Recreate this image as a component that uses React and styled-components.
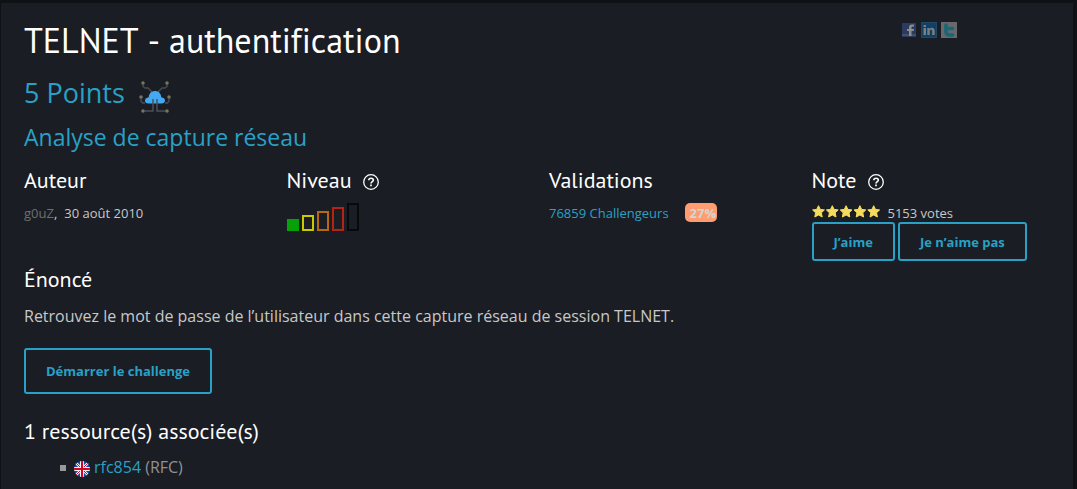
import React from "react";
import styled, { createGlobalStyle } from "styled-components";

const GlobalStyle = createGlobalStyle`
  * { box-sizing: border-box; }
  body {
    margin: 0;
    background: #0f1114;
    color: #c8c8c8;
    font-family: "Open Sans", "Noto Sans", sans-serif;
    font-size: 16px;
    line-height: 24px;
  }
`;

const accent = "#29a1c6";

const Page = styled.div`
  padding: 3px 4px 0 1px;
`;

const Panel = styled.main`
  min-height: calc(100vh - 3px);
  padding: 13px 0 8px 23px;
  background: #1a1d23;
`;

const TopRow = styled.header`
  display: flex;
  justify-content: space-between;
  align-items: flex-start;
`;

const Title = styled.h1`
  margin: 0;
  color: #fff;
  font: 400 34px/48px "PT Sans", "Noto Sans", sans-serif;
  font-kerning: none;
  font-variant-ligatures: none;
`;

const Share = styled.nav`
  display: flex;
  gap: 4px;
  padding: 6px 116px 0 0;
`;

const ShareLink = styled.a`
  display: block;
  height: 16px;
  opacity: 0.5;
  svg { display: block; }
`;

const Points = styled.h2`
  display: flex;
  align-items: center;
  gap: 14px;
  margin: 8px 0 0;
  color: ${accent};
  font: 400 27px/42px "Open Sans", "Noto Sans", sans-serif;
  svg { margin-top: 8px; }
`;

const Category = styled.h3`
  margin: 5px 0 0;
  color: ${accent};
  font: 400 23px/36px "Open Sans", "Noto Sans", sans-serif;
`;

const Facts = styled.section`
  display: grid;
  grid-template-columns: repeat(4, 1fr);
  column-gap: 1px;
  margin-top: 11px;
`;

const Heading = styled.h4`
  display: flex;
  align-items: center;
  gap: 11px;
  margin: 0;
  color: #fff;
  font: 400 22px/28px "PT Sans", "Noto Sans", sans-serif;
`;

const HelpButton = styled.button`
  display: block;
  padding: 3px 0 0;
  border: 0;
  background: none;
  color: #fff;
  svg { display: block; }
`;

const Detail = styled.div`
  display: flex;
  align-items: flex-start;
  gap: ${(p) => p.$gap || 0}px;
  height: 19px;
  margin-top: 9px;
  font-size: 13px;
  line-height: 20px;
  svg { margin-top: 2px; }
`;

const Author = styled.a`
  color: #6f6f6f;
  text-decoration: none;
`;

const Link = styled.a`
  color: ${accent};
  text-decoration: none;
`;

const Levels = styled.div`
  display: flex;
  align-items: flex-end;
  gap: 3px;
  margin-top: 9px;
`;

const Level = styled.span`
  width: 12px;
  height: ${(p) => p.$height}px;
  border: 2px solid ${(p) => p.$color};
  background: ${(p) => (p.$filled ? p.$color : "transparent")};
`;

const Rate = styled.span`
  width: 32px;
  height: 19px;
  padding-left: 5px;
  border-radius: 5px;
  background: #ff9c70;
  color: #d5d5d5;
  font-weight: 700;
`;

const Votes = styled.div`
  display: flex;
  gap: 3px;
`;

const Button = styled.button`
  height: ${(p) => (p.$large ? 46 : 39)}px;
  padding: 0 20px;
  border: 2px solid ${accent};
  border-radius: 3px;
  background: transparent;
  color: ${accent};
  font: 700 13px/16px "Open Sans", "Noto Sans", sans-serif;
  white-space: nowrap;
`;

const Statement = styled.section`
  margin-top: 4px;
  p { margin: 11px 0 20px; }
`;

const Resources = styled.section`
  margin-top: 23px;
`;

const ResourceList = styled.ul`
  margin: 10px 0 0;
  padding: 0;
  list-style: none;
`;

const Resource = styled.li`
  display: flex;
  align-items: center;
  gap: 4px;
  padding-left: 36px;
  color: #929292;
  svg { margin-top: 3px; }
  &::before {
    content: "";
    width: 6px;
    height: 6px;
    margin: 2px 4px 0 0;
    background: #999;
  }
`;

const HelpIcon = () => (
  <svg width="16" height="16" viewBox="0 0 16 16" fill="none" stroke="currentColor" aria-hidden="true">
    <circle cx="8" cy="8" r="7.3" strokeWidth="1.3" />
    <path d="M5.8 6.3C5.8 3.4 10.3 3.6 10.3 6.2C10.3 7.6 8 7.7 8 9.5" strokeWidth="1.6" />
    <path d="M8 10.6V12.3" strokeWidth="1.7" />
  </svg>
);

const Help = ({ label }) => (
  <HelpButton type="button" aria-label={label}><HelpIcon /></HelpButton>
);

const CloudIcon = () => (
  <svg width="32" height="32" viewBox="0 0 32 32" fill="none" aria-hidden="true">
    <g stroke="#484c54" strokeWidth="1.4">
      <path d="M4 3V5.5L6 7H9L13 11M28 3V5.5L26 7H23L19 11" />
      <path d="M2 17V20L3.5 22H6M30 17V20L28.5 22H26" />
    </g>
    <path d="M9.5 22.5C5 22.5 4.5 16.8 9.8 16.2C10 8 22 8 22.2 16.2C27.5 16.8 27 22.5 22.5 22.5Z" fill="#45a9f2" />
    <path d="M14 18V30H4M18 18V30H28" stroke="#4b5059" strokeWidth="1.5" />
    <g fill="#827959" stroke="#565650" strokeWidth=".8">
      <circle cx="4" cy="2" r="1.6" /><circle cx="28" cy="2" r="1.6" />
      <circle cx="2" cy="16" r="1.6" /><circle cx="30" cy="16" r="1.6" />
      <circle cx="4" cy="30" r="1.6" /><circle cx="28" cy="30" r="1.6" />
    </g>
  </svg>
);

const FacebookIcon = () => (
  <svg width="16" height="16" viewBox="0 0 16 16" aria-hidden="true">
    <path fill="#3b5998" d="M1 1H15V15H1Z" />
    <path fill="#6d84b4" d="M1 12H15V14H1Z" />
    <path fill="#fff" d="M8 14V9H6V7H8V5.5C8 3.5 9 2.5 11 2.5H13V4.5H11.5C10.7 4.5 10.5 5 10.5 5.6V7H13L12.6 9H10.5V14Z" />
  </svg>
);

const LinkedinIcon = () => (
  <svg width="16" height="16" viewBox="0 0 16 16" aria-hidden="true">
    <rect width="16" height="16" rx="1" fill="#0863a4" />
    <path d="M.5 .5H15.5V15.5H.5Z" fill="none" stroke="#2774b0" />
    <path fill="#ddd" d="M2.5 6H5V13H2.5ZM2.5 3H5V5H2.5ZM6.3 6H8.6V7C10 5 13.7 5.5 13.7 8.8V13H11.2V9C11.2 7.2 8.7 7.2 8.7 9V13H6.3Z" />
  </svg>
);

const TwitterIcon = () => (
  <svg width="16" height="16" viewBox="0 0 16 16" aria-hidden="true">
    <path fill="#b5b5b5" d="M0 0H16V16H0Z" />
    <path d="M5 3V9.5C5 12 6.5 13 8.5 13H11.5M5 6.5H11.5" fill="none" stroke="#17b0cb" strokeWidth="3.7" strokeLinecap="round" />
  </svg>
);

const Stars = () => (
  <svg width="69" height="14" viewBox="0 0 69 14" role="img" aria-label="5 / 5">
    {[0, 1, 2, 3, 4].map((i) => (
      <path
        key={i}
        transform={`translate(${i * 13.8} 0)`}
        fill="#f5dc5c"
        stroke="#f5dc5c"
        strokeWidth="1"
        strokeLinejoin="round"
        d="M6.5 .7L8.3 4.4L12.4 4.9L9.4 7.8L10.2 12L6.5 10L2.8 12L3.6 7.8L.6 4.9L4.7 4.4Z"
      />
    ))}
  </svg>
);

const UkFlag = () => (
  <svg width="16" height="16" viewBox="0 0 16 16" role="img" aria-label="English">
    <defs><clipPath id="flag"><circle cx="8" cy="8" r="8" /></clipPath></defs>
    <g clipPath="url(#flag)">
      <path fill="#0052b4" d="M0 0H16V16H0Z" />
      <path stroke="#f0f0f0" strokeWidth="2.6" d="M0 0L16 16M16 0L0 16" />
      <path stroke="#d80027" strokeWidth="1" d="M0 0L16 16M16 0L0 16" />
      <path stroke="#f0f0f0" strokeWidth="4" d="M8 0V16M0 8H16" />
      <path stroke="#d80027" strokeWidth="2" d="M8 0V16M0 8H16" />
    </g>
  </svg>
);

const levels = [
  { height: 12, color: "#08a008", filled: true },
  { height: 16, color: "#c9c900" },
  { height: 20, color: "#b76812" },
  { height: 24, color: "#b52315" },
  { height: 28, color: "#08090b" },
];

export default function App() {
  return (
    <Page>
      <GlobalStyle />
      <Panel>
        <TopRow>
          <Title>TELNET - authentification</Title>
          <Share aria-label="Partager">
            <ShareLink href="#facebook" aria-label="Facebook"><FacebookIcon /></ShareLink>
            <ShareLink href="#linkedin" aria-label="LinkedIn"><LinkedinIcon /></ShareLink>
            <ShareLink href="#twitter" aria-label="Twitter"><TwitterIcon /></ShareLink>
          </Share>
        </TopRow>
        <Points>5 Points <CloudIcon /></Points>
        <Category>Analyse de capture réseau</Category>
        <Facts>
          <div>
            <Heading>Auteur</Heading>
            <Detail $gap={7}><span><Author href="#g0uz">g0uZ</Author>,</span><span>30 août 2010</span></Detail>
          </div>
          <div>
            <Heading>Niveau <Help label="Aide sur le niveau" /></Heading>
            <Levels>
              {levels.map((l) => (
                <Level key={l.height} $height={l.height} $color={l.color} $filled={l.filled} />
              ))}
            </Levels>
          </div>
          <div>
            <Heading>Validations</Heading>
            <Detail $gap={16}><Link href="#challengeurs">76859 Challengeurs</Link><Rate>27%</Rate></Detail>
          </div>
          <div>
            <Heading>Note <Help label="Aide sur la note" /></Heading>
            <Detail $gap={7}><Stars /><span>5153 votes</span></Detail>
            <Votes>
              <Button type="button">J’aime</Button>
              <Button type="button">Je n’aime pas</Button>
            </Votes>
          </div>
        </Facts>
        <Statement>
          <Heading>Énoncé</Heading>
          <p>Retrouvez le mot de passe de l’utilisateur dans cette capture réseau de session TELNET.</p>
          <Button type="button" $large>Démarrer le challenge</Button>
        </Statement>
        <Resources>
          <Heading>1 ressource(s) associée(s)</Heading>
          <ResourceList>
            <Resource><UkFlag /><span><Link href="#rfc854">rfc854</Link> (RFC)</span></Resource>
          </ResourceList>
        </Resources>
      </Panel>
    </Page>
  );
}
